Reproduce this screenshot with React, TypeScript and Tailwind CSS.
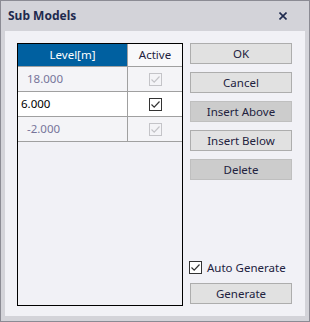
import React from "react";

const font = { fontFamily: '"Noto Sans", "Open Sans", sans-serif' };

function Check({ disabled }: { disabled?: boolean }) {
  return (
    <div
      className={`w-[13px] h-[13px] border flex items-center justify-center ${
        disabled ? "border-[#c4c4c8] bg-[#f4f4f7]" : "border-[#333333] bg-white"
      }`}
    >
      <svg width="11" height="11" viewBox="0 0 11 11">
        <path
          d="M1.5 5.5 L4.2 8.2 L9.5 2.5"
          fill="none"
          stroke={disabled ? "#c4c4c8" : "#333333"}
          strokeWidth="1.2"
        />
      </svg>
    </div>
  );
}

function Btn({ label, disabled }: { label: string; disabled?: boolean }) {
  return (
    <div
      className={`h-[21px] w-[102px] border flex items-center justify-center text-[11.5px] text-[#22223e] ${
        disabled ? "bg-[#cccccc] border-[#bfbfbf]" : "bg-[#e1e1e1] border-[#adadad]"
      }`}
    >
      {label}
    </div>
  );
}

export default function App() {
  const rows = [
    { v: "18.000", active: false },
    { v: "6.000", active: true },
    { v: "-2.000", active: false },
  ];
  return (
    <div
      className="w-[310px] h-[322px] border border-[#8b8b94] bg-[#d3d3d9] flex flex-col"
      style={font}
    >
      <div className="h-[30px] flex items-center justify-between pl-[7px] pr-[22px]">
        <span className="text-[12px] font-bold text-[#1e2a4e]">Sub Models</span>
        <svg width="8" height="8" viewBox="0 0 8 8">
          <path d="M0.5 0.5 L7.5 7.5 M7.5 0.5 L0.5 7.5" stroke="#1e2a4e" strokeWidth="1.6" />
        </svg>
      </div>
      <div className="flex-1 mx-[4px] mb-[5px] bg-[#f1f1f6] flex pl-[12px] pt-[12px] pb-[10px]">
        <div className="w-[166px] border border-black flex flex-col">
          <div className="flex h-[23px] border-b border-[#a0a0a0]">
            <div className="w-[109px] bg-[#0060a0] text-white text-[11.5px] flex items-center justify-center">
              Level[m]
            </div>
            <div className="flex-1 border-l border-[#a0a0a0] bg-[#f8f8fa] text-[11.5px] text-[#22223e] flex items-center justify-center">
              Active
            </div>
          </div>
          {rows.map((r) => (
            <div
              key={r.v}
              className={`flex h-[25px] border-b border-[#a0a0a0] ${
                r.active ? "bg-white" : "bg-[#f4f4f7]"
              }`}
            >
              <div
                className={`w-[109px] text-[11.5px] flex items-center ${
                  r.active ? "text-black pl-[3px]" : "text-[#77749a] pl-[9px]"
                }`}
              >
                {r.v}
              </div>
              <div className="flex-1 border-l border-[#a0a0a0] flex items-center justify-center">
                <Check disabled={!r.active} />
              </div>
            </div>
          ))}
        </div>
        <div className="ml-[7px] flex flex-col">
          <div className="flex flex-col gap-[8px]">
            <Btn label="OK" />
            <Btn label="Cancel" />
            <Btn label="Insert Above" disabled />
            <Btn label="Insert Below" />
            <Btn label="Delete" disabled />
          </div>
          <div className="flex-1" />
          <div className="flex items-center gap-[5px] -ml-[1px] h-[13px]">
            <Check />
            <span className="text-[11.5px] text-[#22223e] leading-[13px]">Auto Generate</span>
          </div>
          <div className="mt-[9px] mb-[2px]">
            <Btn label="Generate" />
          </div>
        </div>
      </div>
    </div>
  );
}
